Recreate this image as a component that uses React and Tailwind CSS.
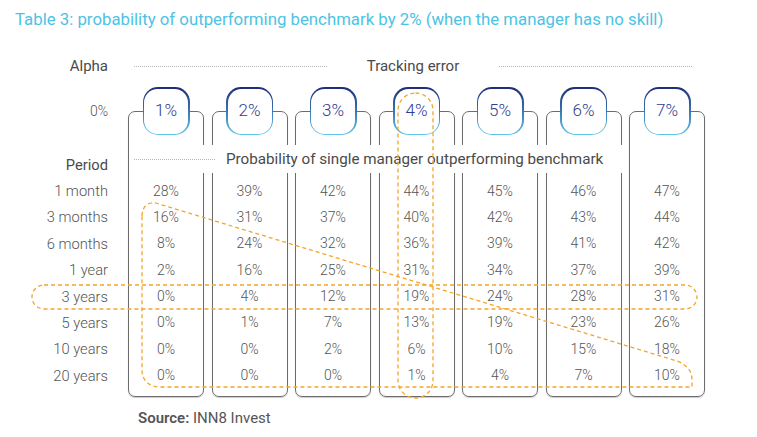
import React from "react";

const periods = ["1 month", "3 months", "6 months", "1 year", "3 years", "5 years", "10 years", "20 years"];

const columns = [
  { te: "1%", values: ["28%", "16%", "8%", "2%", "0%", "0%", "0%", "0%"] },
  { te: "2%", values: ["39%", "31%", "24%", "16%", "4%", "1%", "0%", "0%"] },
  { te: "3%", values: ["42%", "37%", "32%", "25%", "12%", "7%", "2%", "0%"] },
  { te: "4%", values: ["44%", "40%", "36%", "31%", "19%", "13%", "6%", "1%"] },
  { te: "5%", values: ["45%", "42%", "39%", "34%", "24%", "19%", "10%", "4%"] },
  { te: "6%", values: ["46%", "43%", "41%", "37%", "28%", "23%", "15%", "7%"] },
  { te: "7%", values: ["47%", "44%", "42%", "39%", "31%", "26%", "18%", "10%"] },
];

const Column = ({ col }) => {
  return (
    <div className="flex flex-col items-center w-[76px]">
      <div className="relative z-10 w-[47px] h-[48px] rounded-[15px] p-[1.5px] bg-gradient-to-b from-[#1f2a78] to-[#5fc6ec]">
        <div className="w-full h-full rounded-[13.5px] bg-white flex items-center justify-center text-[17px] font-light text-[#2f3c92]">
          {col.te}
        </div>
      </div>
      <div className="-mt-[24px] w-full h-[286px] rounded-[7px] border-[1.5px] border-[#6c6c6c] shadow-[0_1px_1px_rgba(0,0,0,0.2)] pt-[65.5px] flex flex-col">
        {col.values.map((v, i) => (
          <div key={i} className="h-[26.4px] leading-[26.4px] text-center text-[14px] font-light text-[#555]">
            {v}
          </div>
        ))}
      </div>
    </div>
  );
};

export default function App() {
  return (
    <div
      className="relative w-[757px] h-[437px] bg-white overflow-hidden"
      style={{ fontFamily: "Roboto, 'Open Sans', sans-serif" }}
    >
      <div className="pt-[9px] pl-[15px] text-[16.8px] leading-[20px] text-[#4cc3e4] whitespace-nowrap">
        Table 3: probability of outperforming benchmark by 2% (when the manager has no skill)
      </div>

      {/* alpha / tracking error */}
      <div className="mt-[27px] flex items-center h-[20px]">
        <div className="w-[108px] text-right text-[15px] text-[#4a4a4a]">Alpha</div>
        <div className="ml-[20px] w-[577px] flex items-center pl-[6px] pr-[13px]">
          <div className="flex-1 border-t border-dotted border-[#b5b5b5]"></div>
          <div className="px-[40px] text-[15px] text-[#4a4a4a]">Tracking error</div>
          <div className="flex-1 border-t border-dotted border-[#b5b5b5]"></div>
        </div>
      </div>

      {/* table */}
      <div className="relative mt-[11px] flex gap-[20px]">
        <div className="w-[108px] flex flex-col text-right text-[14.7px] font-light text-[#555]">
          <div className="h-[48px] flex items-center justify-end text-[14px]">0%</div>
          <div className="mt-[17px] h-[26px] leading-[26px] font-normal text-[#4a4a4a]">Period</div>
          {periods.map((p) => (
            <div key={p} className="h-[26.4px] leading-[26.4px]">
              {p}
            </div>
          ))}
        </div>
        <div className="flex gap-[7.5px]">
          {columns.map((c) => (
            <Column key={c.te} col={c} />
          ))}
        </div>

        <div className="absolute z-20 left-[130px] top-[58px] w-[495px] h-[28px] bg-white flex items-center">
          <div className="ml-[4px] w-[81px] border-t border-dotted border-[#b5b5b5]"></div>
          <div className="ml-[11px] text-[15.2px] text-[#4a4a4a] whitespace-nowrap">
            Probability of single manager outperforming benchmark
          </div>
        </div>
      </div>

      <div className="mt-[11px] pl-[138px] text-[15px] leading-[20px] text-[#555]">
        <span className="font-semibold">Source:</span> INN8 Invest
      </div>

      {/* orange highlight marks */}
      <svg className="absolute inset-0 z-30 pointer-events-none" width="757" height="437" viewBox="0 0 757 437" fill="none">
        <g stroke="#f4a52a" strokeWidth="1.3" strokeDasharray="4 3">
          <rect x="32" y="285" width="665" height="24" rx="12" />
          <rect x="398" y="93" width="35" height="305" rx="17.5" />
          <path d="M142 216 C142 206 149 200 159 204 L677 361 C687 365 692 371 692 380 L692 387 L160 387 C150 387 142 381 142 370 Z" />
        </g>
      </svg>
    </div>
  );
}
